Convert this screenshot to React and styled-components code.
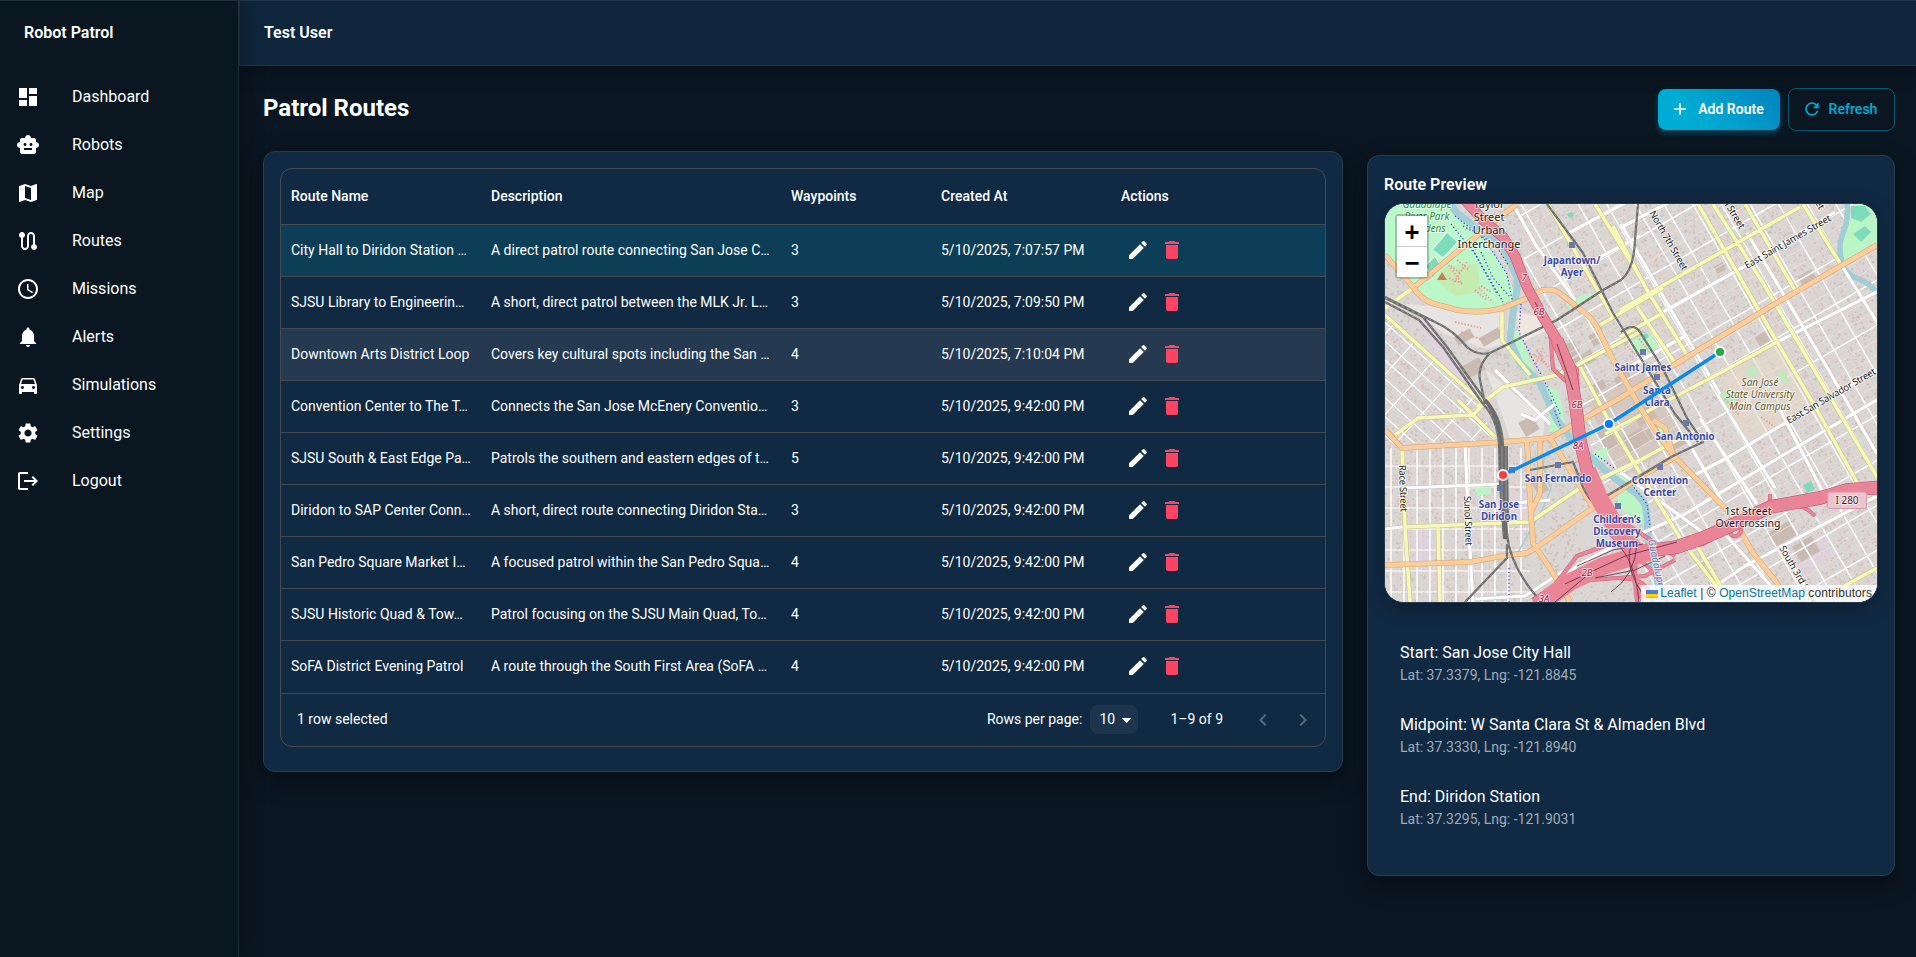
import React from 'react';
import styled, { createGlobalStyle, css } from 'styled-components';
import {
  MdDashboard, MdSmartToy, MdMap, MdRoute, MdAccessTime, MdNotifications,
  MdDirectionsCar, MdSettings, MdLogout, MdEdit, MdDelete, MdAdd, MdRefresh,
  MdArrowDropDown, MdKeyboardArrowLeft, MdKeyboardArrowRight,
} from 'react-icons/md';

const GlobalStyle = createGlobalStyle`
  *, *::before, *::after { box-sizing: border-box; }
  body {
    margin: 0;
    background: #0a1621;
    color: #fff;
    font-family: Roboto, "Liberation Sans", sans-serif;
    font-size: 16px;
    line-height: 1.5;
    -webkit-font-smoothing: antialiased;
  }
`;

const gridLine = '#464a4e';

const Shell = styled.div`
  display: flex;
  height: 957px;
  overflow: hidden;
`;

const Sidebar = styled.aside`
  position: relative;
  z-index: 2;
  flex: 0 0 239px;
  background: #0a1721;
  border-top: 1px solid #1f303b;
  border-right: 1px solid #1f303b;
  box-shadow: 4px 0 20px rgba(0, 0, 0, 0.3);
`;

const Brand = styled.div`
  height: 64px;
  padding: 0 24px;
  display: flex;
  align-items: center;
  font-weight: 600;
`;

const Nav = styled.nav`
  display: flex;
  flex-direction: column;
  padding: 8px 0;
`;

const NavItem = styled.a`
  display: flex;
  align-items: center;
  height: 48px;
  padding: 0 16px;
  gap: 32px;

  svg { width: 24px; height: 24px; }
`;

const Column = styled.div`
  flex: 1;
  min-width: 0;
  display: flex;
  flex-direction: column;
`;

const TopBar = styled.header`
  flex: 0 0 66px;
  display: flex;
  align-items: center;
  padding: 0 24px;
  background: #0f263c;
  border: 1px solid #21374b;
  border-right: 0;
  box-shadow: 0 4px 20px rgba(0, 0, 0, 0.3);
  font-weight: 600;
`;

const Content = styled.main`
  display: flex;
  flex-direction: column;
  padding: 22px 21px 0 24px;
`;

const TitleRow = styled.div`
  display: flex;
  justify-content: space-between;
  height: 63px;
`;

const PageTitle = styled.h1`
  margin: 0;
  font-size: 24px;
  font-weight: 700;
  line-height: 40px;
`;

const ButtonGroup = styled.div`
  display: flex;
  align-items: center;
  height: 43px;
  gap: 8px;
`;

const Button = styled.button`
  display: inline-flex;
  align-items: center;
  justify-content: center;
  padding: 0 4px 1px 0;
  border: 0;
  border-radius: 8px;
  font: 600 14px/24px Roboto, sans-serif;
  color: #fff;

  svg { width: 20px; height: 20px; }

  ${({ $outlined }) => ($outlined
    ? css`
      width: 107px;
      height: 43px;
      gap: 7px;
      background: transparent;
      border: 1px solid #07586e;
      color: #00a7ce;
    `
    : css`
      width: 122px;
      height: 41px;
      gap: 8px;
      background: linear-gradient(45deg, #00acd4 30%, #0288bf 90%);
      box-shadow: 0 3px 6px rgba(0, 172, 212, 0.35);
    `)}
`;

const Panels = styled.div`
  display: grid;
  grid-template-columns: 1080px 528px;
  column-gap: 24px;
  align-items: start;
`;

const Card = styled.section`
  background: #112a43;
  border: 1px solid #273d52;
  border-radius: 12px;
  padding: 16px 16px 24px;
  box-shadow: 0 8px 24px rgba(0, 0, 0, 0.4);
  margin-top: ${({ $offset }) => $offset || 0}px;
`;

const Grid = styled.div`
  border: 1px solid ${gridLine};
  border-radius: 12px;
  overflow: hidden;
  font-size: 14px;
`;

const rowColors = { selected: '#0d3e57', hover: '#253a50' };

const Row = styled.div`
  display: grid;
  grid-template-columns: 200px 300px 150px 180px 1fr;
  height: ${({ $head }) => ($head ? 56 : 52)}px;
  align-items: center;
  border-bottom: 1px solid ${gridLine};
  background: ${({ $state }) => rowColors[$state] || 'transparent'};
  font-weight: ${({ $head }) => ($head ? 500 : 400)};

  &:last-of-type { border-bottom-color: transparent; }
`;

const Cell = styled.span`
  padding: 0 10px;
  overflow: hidden;
  white-space: nowrap;
  text-overflow: ellipsis;
`;

const Actions = styled.span`
  display: flex;
  padding: 0 10px 1px;
`;

const IconButton = styled.span`
  display: inline-flex;
  padding: 5px;
  color: ${({ $danger }) => ($danger ? '#ff4463' : '#fff')};

  svg { width: 24px; height: 24px; }
`;

const GridFooter = styled.footer`
  display: flex;
  align-items: center;
  height: 53px;
  padding: 0 2px 1px 16px;
  border-top: 1px solid ${gridLine};
`;

const Spacer = styled.span`
  flex: 1;
`;

const PageSize = styled.span`
  display: inline-flex;
  align-items: center;
  justify-content: space-between;
  width: 48px;
  height: 29px;
  margin: 0 32px 0 8px;
  padding: 0 0 0 9px;
  border-radius: 8px;
  background: #1d364d;

  svg { width: 24px; height: 24px; }
`;

const Pager = styled.span`
  display: inline-flex;
  gap: 16px;
  margin-left: 28px;
  margin-right: 8px;
  color: #56697b;

  svg { width: 24px; height: 24px; }
`;

const PanelTitle = styled.h2`
  margin: 0 0 5px;
  font-size: 16px;
  font-weight: 600;
  line-height: 26px;
`;

const MapFrame = styled.div`
  position: relative;
  height: 400px;
  border: 1px solid #243b50;
  border-radius: 20px;
  overflow: hidden;
  background: #dcd8d6;

  > svg { display: block; width: 492px; height: 398px; }
`;

const MapShadow = styled.div`
  border-radius: 20px;
  box-shadow: 0 4px 20px rgba(0, 0, 0, 0.3);
`;

const ZoomBar = styled.div`
  position: absolute;
  left: 10px;
  top: 10px;
  border: 2px solid rgba(0, 0, 0, 0.2);
  border-radius: 4px;
  background-clip: padding-box;
`;

const ZoomButton = styled.div`
  display: flex;
  align-items: center;
  justify-content: center;
  width: 30px;
  height: 30px;
  padding-top: 2px;
  background: #fff;
  color: #000;
  font: bold 24px/30px "DejaVu Sans Mono", monospace;

  & + & { border-top: 1px solid #ccc; height: 31px; }
`;

const Attribution = styled.div`
  position: absolute;
  right: 0;
  bottom: 0;
  display: flex;
  align-items: center;
  gap: 2px;
  padding: 0 5px;
  background: rgba(255, 255, 255, 0.8);
  color: #333;
  font: 12px/17px "Liberation Sans", Arial, sans-serif;
  letter-spacing: 0.08px;
  white-space: pre;

  a { color: #0078a8; }
`;

const Stops = styled.ul`
  list-style: none;
  margin: 16px 0 0;
  padding: 8px 0;
`;

const Stop = styled.li`
  height: 72px;
  padding: 14px 16px;
`;

const StopName = styled.div`
  font-size: 16px;
  line-height: 24px;
`;

const StopCoords = styled.div`
  font-size: 14px;
  line-height: 20px;
  color: #a0aab4;
`;

const navItems = [
  [MdDashboard, 'Dashboard'],
  [MdSmartToy, 'Robots'],
  [MdMap, 'Map'],
  [MdRoute, 'Routes'],
  [MdAccessTime, 'Missions'],
  [MdNotifications, 'Alerts'],
  [MdDirectionsCar, 'Simulations'],
  [MdSettings, 'Settings'],
  [MdLogout, 'Logout'],
];

const routes = [
  ['City Hall to Diridon Station …', 'A direct patrol route connecting San Jose C…', 3, '5/10/2025, 7:07:57 PM', 'selected'],
  ['SJSU Library to Engineerin…', 'A short, direct patrol between the MLK Jr. L…', 3, '5/10/2025, 7:09:50 PM'],
  ['Downtown Arts District Loop', 'Covers key cultural spots including the San …', 4, '5/10/2025, 7:10:04 PM', 'hover'],
  ['Convention Center to The T…', 'Connects the San Jose McEnery Conventio…', 3, '5/10/2025, 9:42:00 PM'],
  ['SJSU South & East Edge Pa…', 'Patrols the southern and eastern edges of t…', 5, '5/10/2025, 9:42:00 PM'],
  ['Diridon to SAP Center Conn…', 'A short, direct route connecting Diridon Sta…', 3, '5/10/2025, 9:42:00 PM'],
  ['San Pedro Square Market I…', 'A focused patrol within the San Pedro Squa…', 4, '5/10/2025, 9:42:00 PM'],
  ['SJSU Historic Quad & Tow…', 'Patrol focusing on the SJSU Main Quad, To…', 4, '5/10/2025, 9:42:00 PM'],
  ['SoFA District Evening Patrol', 'A route through the South First Area (SoFA …', 4, '5/10/2025, 9:42:00 PM'],
];

const stops = [
  ['Start: San Jose City Hall', 'Lat: 37.3379, Lng: -121.8845'],
  ['Midpoint: W Santa Clara St & Almaden Blvd', 'Lat: 37.3330, Lng: -121.8940'],
  ['End: Diridon Station', 'Lat: 37.3295, Lng: -121.9031'],
];

/* ---------- City map ---------- */

// Seeded generator, so the building footprints are the same on every render.
function makeRandom(seed) {
  let s = seed;
  return () => {
    s = (s * 1664525 + 1013904223) % 4294967296;
    return s / 4294967296;
  };
}

function buildings(seed, count, min, max) {
  const rnd = makeRandom(seed);
  let d = '';
  for (let i = 0; i < count; i += 1) {
    const x = (rnd() * 760 - 220).toFixed(1);
    const y = (rnd() * 760 - 60).toFixed(1);
    const w = (min + rnd() * (max - min)).toFixed(1);
    const h = (min + rnd() * (max - min)).toFixed(1);
    d += `M${x} ${y}h${w}v${h}h-${w}z`;
  }
  return d;
}

function ruled(from, to, step, start, end, vertical) {
  let d = '';
  for (let p = from; p <= to; p += step) {
    d += vertical ? `M${p} ${start}V${end}` : `M${start} ${p}H${end}`;
  }
  return d;
}

const footprints = [
  [buildings(7, 16000, 1, 2.6), '#cbc2bd'],
  [buildings(21, 5000, 1, 2), '#e2dedc'],
  [buildings(33, 1400, 1, 2), '#efc0bb'],
];

const bigBlocks = [
  [188, 150, 22, 12], [175, 140, 18, 14], [205, 128, 14, 12], [95, 128, 22, 10], [70, 128, 18, 10],
  [75, 158, 24, 14], [250, 205, 20, 14], [240, 228, 22, 16], [262, 222, 16, 12], [215, 225, 14, 20],
  [136, 214, 16, 16], [372, 128, 18, 14], [415, 68, 16, 14], [230, 170, 16, 10], [205, 178, 16, 10],
  [385, 322, 24, 16], [410, 336, 22, 18], [148, 270, 12, 20], [284, 232, 16, 12], [330, 60, 10, 8],
];

const greens = [
  'M162 196L165 228L180 226L178 204L172 186L150 178Z',
  'M246 137L262 128L274 142L258 152L247 148Z',
  'M180 100L205 88L208 93L184 104Z',
  'M235 283L258 290L264 322L250 318L232 300Z',
  'M205 250L222 243L222 254L208 264Z',
  'M455 42L462 18L470 0H492V40L470 54L458 60Z',
  'M90 284L105 282L106 290L92 292Z',
  'M230 268L244 276L250 286L238 280Z',
  'M122 120L135 130L155 182L145 176L124 150Z',
  'M268 226L276 222L284 244L278 246Z',
];

const orangeRoads = [
  'M132 0L115 13L28 84',
  'M0 51L28 83Q36 96 50 100L72 106Q96 110 118 104L142 94L158 86Q168 84 176 90L192 103Q206 112 212 123L228 156L255 203L268 223L288 251L345 309L368 349L392 379L402 398',
  'M492 41L388 101L302 153L235 194L165 234L118 238L17 244L0 226',
  'M142 236L145 296L148 339L168 369L185 398',
  'M155 236V289L147 306',
  'M0 361L85 358L118 352L142 349L152 343L205 306L255 273L290 253',
  'M165 234L208 303',
  'M268 216L280 224L288 250',
];

const yellowRoads = [
  'M313 0L392 138L432 206L480 293', 'M328 0L378 79L453 206L492 273', 'M360 0L410 86',
  'M418 0L455 59', 'M235 106L415 3', 'M215 121L278 84', 'M235 133L278 109',
  'M392 138L335 169L278 199L220 230', 'M228 22L262 86L302 151', 'M252 103L290 159',
  'M210 0L255 73', 'M163 0L228 113', 'M0 111L102 203', 'M28 84L0 104',
  'M92 203L118 183L172 171L198 158L255 128', 'M117 108V136L145 171',
  'M195 163L225 219L255 269L295 334L332 383L340 398', 'M73 196L110 233',
  'M10 231L33 214L88 211L102 196', 'M17 244L20 323L25 398',
  'M20 323L118 319L145 318L192 286L255 256L300 232', 'M53 323L55 398',
  'M305 330L345 398', 'M430 398L492 364', 'M480 293L492 286',
];

const whiteRoads = [
  'M128 0L150 40L190 96', 'M182 30L253 -8', 'M202 60L255 32', 'M235 24L300 -10',
  'M236 20L300 130L335 190', 'M362 29L440 160L492 250', 'M278 108L360 62L450 8', 'M300 132L235 168',
  'M392 138L492 88', 'M455 59L492 118', 'M118 250V236', 'M255 330L300 310L400 250L492 196',
  'M402 218L340 255L300 276', 'M310 396L360 362L492 292', 'M160 390L192 362L255 328',
  'M152 343L170 372', 'M80 238L84 330L88 398', 'M20 284L118 280', 'M0 325L25 322', 'M118 300L165 296',
  'M235 268L320 330', 'M300 232L350 320', 'M315 214L372 300', 'M332 190L390 284', 'M392 200L440 292',
  'M340 330L400 398', 'M395 341L430 398', 'M110 166L165 220', 'M136 210L150 216L170 200', 'M90 395L140 392L180 366',
];

const river = 'M65 0L72 9L95 26L118 43L132 73L132 86L128 109L125 136L135 159L155 179L167 206L172 216L185 233L212 259L232 276L252 290L260 300L262 313L263 336L272 376L277 398';

const rails = [
  'M162 0L198 49L228 109L255 153L290 210L313 238',
  'M253 0L250 36Q249 66 236 76L218 86L172 116L105 149Q92 152 82 143Q68 126 52 119L0 93',
  'M0 94L38 113L62 143L100 196Q116 210 118 240L118 279L122 329Q124 360 152 393',
  'M0 98L34 116L58 143L98 200Q112 214 114 240L115 279L119 335',
  'M105 149Q92 162 95 176L100 200', 'M122 340L122 354L80 398',
  'M145 266L188 258L198 283Q206 300 212 299', 'M218 294L235 284L288 252L318 238L302 214L278 165L255 128Q248 118 236 128',
];

const paths87 = 'M80 -4L98 16L118 33L130 52L142 83L158 113L172 136L185 166L190 196L195 236L202 266L215 296L232 325L250 346';
const paths280 = 'M500 283L462 286L435 294L385 303L352 319L318 334L292 343L255 348L218 363L185 378L150 400';
const ramps = [
  'M165 125L168 165L182 178', 'M165 133L192 166L193 200', 'M295 343L318 340L350 322',
  'M385 303V290', 'M345 322Q344 334 352 332Q360 328 352 316', 'M410 301Q422 303 430 312',
  'M158 396L192 352L230 338', 'M232 325Q248 350 252 398', 'M205 376L260 372L290 356',
  'M262 346Q240 356 258 398', 'M225 330L262 362Q275 372 282 398', 'M236 375Q262 372 268 398', 'M235 316L290 352',
];

const stations = [[187, 41], [258, 148], [272, 173], [301, 219], [275, 263], [173, 261], [115, 284], [127, 266], [233, 302]];

const stationLabels = [
  ['Japantown/', 187, 60], ['Ayer', 187, 72], ['Saint James', 258, 167], ['Santa', 272, 190],
  ['Clara', 272, 202], ['San Antonio', 300, 236], ['Convention', 275, 280], ['Center', 275, 292],
  ['San Fernando', 173, 278], ['San Jose', 114, 304], ['Diridon', 114, 316],
  ['Children’s', 232, 319], ['Discovery', 232, 331], ['Museum', 232, 343],
];

const placeLabels = [
  ['Taylor', 104, 4], ['Street', 104, 17], ['Urban', 104, 30], ['Interchange', 104, 44],
  ['1st Street', 363, 311], ['Overcrossing', 363, 323],
];

const streetLabels = [
  ['East Saint James Street', 362, 65, -30, 98], ['North 7th Street', 264, 9, 60, 67],
  ['11th Street', 331, -14, 59, 46], ['Street', 421, -16, 59, 26],
  ['East San Salvador Street', 404, 220, -30, 101], ['Race Street', 14, 261, 88, 47],
  ['Sunol Street', 79, 292, 88, 50], ['South 3rd Street', 394, 344, 60, 70],
];

const exits = [['7', 139, 77], ['6B', 154, 111], ['6B', 192, 204], ['8A', 193, 245], ['2B', 202, 372], ['3A', 159, 398]];

const Label = styled.text`
  font-family: "Noto Sans", sans-serif;
  font-size: ${({ $size }) => $size || 10}px;
  font-weight: ${({ $bold }) => ($bold ? 700 : 400)};
  font-style: ${({ $italic }) => ($italic ? 'italic' : 'normal')};
  fill: ${({ $color }) => $color};
  text-anchor: ${({ $start }) => ($start ? 'start' : 'middle')};
  stroke: rgba(255, 255, 255, 0.65);
  stroke-width: 2px;
  stroke-linejoin: round;
  paint-order: stroke;
`;

function Roads({ list, casing, fill, width }) {
  const d = list.join('');
  return (
    <g fill="none" strokeLinejoin="round">
      <path d={d} stroke={casing} strokeWidth={width + 1} />
      <path d={d} stroke={fill} strokeWidth={width} />
    </g>
  );
}

function CityMap() {
  return (
    <svg viewBox="0 0 492 398">
      <defs>
        <clipPath id="east"><path d="M135 0H492V398H260L215 290L190 160L140 70Z" /></clipPath>
        <clipPath id="west"><path d="M0 244H145V398H0Z" /></clipPath>
        <clipPath id="mid"><path d="M0 108L92 196L110 236L0 240Z" /></clipPath>
      </defs>
      <rect width="492" height="398" fill="#dad6d4" />
      {footprints.map(([d, fill]) => <path key={fill} d={d} fill={fill} transform="rotate(-30)" />)}
      <path d="M20 100L118 108V140L100 145L60 130ZM100 165L160 215L158 234H125L112 196Z" fill="#e7e5e3" />
      <path d="M132 108L158 112L165 125L134 140Z" fill="#efe6e1" />
      <path d="M30 110L60 140L90 185L60 165ZM128 290L142 290V318L122 318Z" fill="#e0d3df" />
      <path d="M20 325L50 325V360L22 360ZM395 345L440 330L450 350L420 375Z" fill="#e0d3df" opacity="0.6" />
      <path d="M202 196L255 165L300 235L235 275Z" fill="#d2c5bc" opacity="0.8" />
      {bigBlocks.map(([x, y, w, h]) => (
        <rect key={`${x}-${y}`} x={x} y={y} width={w} height={h} fill="#c9bbb1" transform={`rotate(-30 ${x + w / 2} ${y + h / 2})`} />
      ))}

      <g clipPath="url(#east)">
        <g transform="rotate(-30)" fill="none">
          <path d={ruled(-180, 460, 12.4, -60, 640, true)} stroke="#f2b3ad" strokeWidth="0.8" strokeDasharray="2 2" />
          <path d={ruled(0, 620, 13, -220, 480, false)} stroke="#efdedb" strokeWidth="0.8" />
          <path d={ruled(-180, 460, 24.8, -60, 640, true)} stroke="#fff" strokeWidth="1.5" />
          <path d={ruled(0, 620, 39, -220, 480, false)} stroke="#fff" strokeWidth="1.5" />
        </g>
      </g>
      <path d="M334 174L392 142L425 205L358 240Z" fill="#e6d9c8" opacity="0.6" />
      <path d="M334 190l12 -6 8 14 -12 6zM360 166l10 -5 4 8 -10 5zM392 168l6 -3 6 12 -6 3z" fill="#c2e8bd" />
      <g clipPath="url(#west)" fill="none" stroke="#fff">
        <path d={ruled(6, 145, 13, 240, 398, true)} strokeWidth="1.4" />
        <path d={ruled(262, 398, 21, 0, 145, false)} strokeWidth="1.2" />
        <path d={ruled(12.5, 145, 13, 240, 398, true)} stroke="#f2bcb7" strokeWidth="0.6" strokeDasharray="2 2" />
      </g>
      <g clipPath="url(#mid)">
        <g transform="rotate(42)" fill="none" stroke="#fff" strokeWidth="1.2">
          <path d={ruled(60, 250, 14, 0, 320, false)} />
          <path d={ruled(67, 250, 14, 0, 320, false)} stroke="#f2b3ad" strokeWidth="0.8" strokeDasharray="2 2" />
          <path d={ruled(60, 320, 27, 40, 260, true)} />
        </g>
      </g>

      <path d="M0 0H63L95 29L118 63L132 93L112 103L85 108L48 99L28 83L0 49Z" fill="#bbf7c9" />
      <path d="M62 62L92 60L96 88L70 92L52 76Z" fill="#c4ecb0" />
      {greens.map((d) => <path key={d} d={d} fill="#bbf5c6" />)}
      <path d="M47 46L62 28L73 38L58 54ZM40 62L50 52L56 62L46 70Z" fill="#7ddcbb" stroke="#e8f7ec" strokeWidth="1.2" />
      <path d="M466 2h14l6 8-10 8-10-4zM468 30l12-8 6 6-10 10zM256 131l6-2 2 4-6 3zM182 10l5-2 2 4-5 2zM418 281l8-4 4 8-8 4z" fill="#7ddcbb" />
      <path d="M52 76L57 68L62 76Z" fill="#c98246" />

      <path d={river} fill="none" stroke="#a0cdd8" strokeWidth="7" strokeLinejoin="round" />
      <path d="M462 0Q464 16 457 32Q452 46 459 64Q464 72 476 76Q486 80 496 94" fill="none" stroke="#a0cdd8" strokeWidth="5.5" />
      <path d="M160 250L158 262L166 285L156 308L132 350" fill="none" stroke="#a0cdd8" strokeWidth="1.5" />
      <path
        d="M70 12L100 36L122 70L128 100M66 20L90 50L112 90M96 48L108 74L124 92M88 46L118 98M78 22L110 40L124 62M136 100L134 128L145 150L166 190L176 212M166 196L178 230M210 250L240 272L262 300L266 330M124 364V398"
        fill="none" stroke="#3448e0" strokeWidth="1.2" strokeDasharray="1.3 2.4"
      />
      <path
        d="M66 62l10 8m-4 -14l12 10m-20 8l14 6m18 2l10 6m-16 -2l12 10m-60 -20l8 -6M60 56l16 22m6 -20l-14 22m26 4l14 14M148 150l16 12m-12 -16l14 22m-8 -24l-8 18M340 195l14 16m6 -30l-10 24m26 8l14 10M70 118l26 6m-20 4l22 8M240 140l14 14m-2 -22l12 16"
        fill="none" stroke="#ef9e98" strokeWidth="1.8" strokeDasharray="1.6 1.6"
      />

      <g fill="none" stroke="#fff" strokeWidth="3.2" strokeLinejoin="round">
        <path d={whiteRoads.join('')} stroke="#c9c4c1" strokeWidth="4" />
        <path d={whiteRoads.join('')} />
      </g>
      <Roads list={yellowRoads} casing="#c4c384" fill="#f6f8b8" width={3.6} />
      <Roads list={orangeRoads} casing="#d3a469" fill="#fccd9c" width={4.6} />

      <g fill="none" strokeLinejoin="round">
        <path d={rails.join('')} stroke="#6c6c6c" strokeWidth="2.2" />
        <path d={rails.join('')} stroke="#a9a9a9" strokeWidth="0.6" strokeDasharray="3 3" />
        <path d="M100 196Q114 212 116 240L117 279L121 335" stroke="#6c6c6c" strokeWidth="4" />
        <path d="M119 242L120 318" stroke="#6c6c6c" strokeWidth="8" />
        <path d="M117 242V318M121 242V318" stroke="#b5b5b5" strokeWidth="0.6" />
      </g>

      <g fill="none" strokeLinejoin="round">
        <path d={ramps.join('')} stroke="#cf5f7c" strokeWidth="4" />
        <path d={ramps.join('')} stroke="#ea8598" strokeWidth="3" />
        <path d={paths87} stroke="#b64f6a" strokeWidth="10.5" />
        <path d="M172 136L185 166L190 196L195 236L202 266L215 296L232 325L250 346" stroke="#b64f6a" strokeWidth="13" />
        <path d={paths280} stroke="#b64f6a" strokeWidth="13.5" />
        <path d="M202 266L215 296L232 325L250 346" stroke="#ea8598" strokeWidth="18" />
        <path d="M270 346L218 362L185 378L160 396" stroke="#ea8598" strokeWidth="18" />
        <path d={paths87} stroke="#ea8598" strokeWidth="9.5" />
        <path d="M172 136L185 166L190 196L195 236L202 266L215 296" stroke="#ea8598" strokeWidth="12" />
        <path d={paths280} stroke="#ea8598" strokeWidth="12.5" />
        <path
          d="M180 380L240 352L292 338M192 362L228 346L258 340M210 374L250 366L280 352M232 340Q250 356 254 398M248 336Q236 362 262 396M226 388Q250 372 252 340M172 140L188 186M150 98L158 114M170 398L204 370"
          stroke="#6b3346" strokeWidth="0.9"
        />
      </g>

      {stations.map(([x, y]) => (
        <rect key={`${x}-${y}`} x={x - 3} y={y - 3} width="6" height="6" fill="#6a79ab" />
      ))}

      {['Guadalupe', 'River Park', 'Gardens'].map((t, i) => (
        <Label key={t} x={42} y={4 + i * 12} $italic $color="#2e8a44">{t}</Label>
      ))}
      {['San José', 'State University', 'Main Campus'].map((t, i) => (
        <Label key={t} x={375} y={182 + i * 12} $italic $color="#665f35">{t}</Label>
      ))}
      {placeLabels.map(([t, x, y]) => <Label key={t} x={x} y={y} $size={y < 50 ? 11 : 10.5} $color="#1d1d1d">{t}</Label>)}
      {streetLabels.map(([t, x, y, a, len]) => (
        <Label key={`${t}${x}`} transform={`translate(${x} ${y}) rotate(${a})`} textLength={len} $size={9.6} $start $color="#1d1d1d">{t}</Label>
      ))}
      <Label transform="translate(263 336) rotate(78)" $start $italic $color="#5383b4">Guadalupe</Label>
      {exits.map(([t, x, y]) => <Label key={`${t}${x}${y}`} x={x} y={y} $size={9.5} $italic $color="#9c2442">{t}</Label>)}
      {stationLabels.map(([t, x, y]) => <Label key={t} x={x} y={y} $size={9.8} $bold $color="#3b4ba6">{t}</Label>)}
      <rect x="442.5" y="288" width="39" height="16.5" rx="2" fill="#ecc4cd" stroke="#d49aa9" />
      <Label x={462} y={300} $size={10} $color="#4d2030">I 280</Label>

      <path d="M335 148L224 220L118 271" fill="none" stroke="#0b8aec" strokeWidth="3.4" strokeLinejoin="round" />
      {[[335, 148, '#28a745'], [224, 220, '#067bff'], [118, 271, '#ff3a3a']].map(([x, y, fill]) => (
        <circle key={fill} cx={x} cy={y} r="5" fill={fill} stroke="#fff" strokeWidth="1.8" />
      ))}
    </svg>
  );
}

function Flag() {
  return (
    <svg width="12" height="8" viewBox="0 0 12 8">
      <path fill="#4C7BE1" d="M0 0h12v4H0z" />
      <path fill="#FFD500" d="M0 4h12v3H0z" />
      <path fill="#E0BC00" d="M0 7h12v1H0z" />
    </svg>
  );
}

export default function App() {
  return (
    <Shell>
      <GlobalStyle />
      <Sidebar>
        <Brand>Robot Patrol</Brand>
        <Nav>
          {navItems.map(([Icon, label]) => (
            <NavItem key={label}><Icon />{label}</NavItem>
          ))}
        </Nav>
      </Sidebar>
      <Column>
        <TopBar>Test User</TopBar>
        <Content>
          <TitleRow>
            <PageTitle>Patrol Routes</PageTitle>
            <ButtonGroup>
              <Button><MdAdd />Add Route</Button>
              <Button $outlined><MdRefresh />Refresh</Button>
            </ButtonGroup>
          </TitleRow>
          <Panels>
            <Card>
              <Grid>
                <Row $head>
                  <Cell>Route Name</Cell>
                  <Cell>Description</Cell>
                  <Cell>Waypoints</Cell>
                  <Cell>Created At</Cell>
                  <Cell>Actions</Cell>
                </Row>
                {routes.map(([name, description, waypoints, created, state]) => (
                  <Row key={name} $state={state}>
                    <Cell>{name}</Cell>
                    <Cell>{description}</Cell>
                    <Cell>{waypoints}</Cell>
                    <Cell>{created}</Cell>
                    <Actions>
                      <IconButton><MdEdit /></IconButton>
                      <IconButton $danger><MdDelete /></IconButton>
                    </Actions>
                  </Row>
                ))}
                <GridFooter>
                  <span>1 row selected</span>
                  <Spacer />
                  <span>Rows per page:</span>
                  <PageSize>10<MdArrowDropDown /></PageSize>
                  <span>1–9 of 9</span>
                  <Pager><MdKeyboardArrowLeft /><MdKeyboardArrowRight /></Pager>
                </GridFooter>
              </Grid>
            </Card>
            <Card $offset={4}>
              <PanelTitle>Route Preview</PanelTitle>
              <MapShadow>
                <MapFrame>
                  <CityMap />
                  <ZoomBar>
                    <ZoomButton>+</ZoomButton>
                    <ZoomButton>−</ZoomButton>
                  </ZoomBar>
                  <Attribution>
                    <Flag />
                    <span><a>Leaflet</a> | © <a>OpenStreetMap</a> contributors</span>
                  </Attribution>
                </MapFrame>
              </MapShadow>
              <Stops>
                {stops.map(([name, coords]) => (
                  <Stop key={name}>
                    <StopName>{name}</StopName>
                    <StopCoords>{coords}</StopCoords>
                  </Stop>
                ))}
              </Stops>
            </Card>
          </Panels>
        </Content>
      </Column>
    </Shell>
  );
}
